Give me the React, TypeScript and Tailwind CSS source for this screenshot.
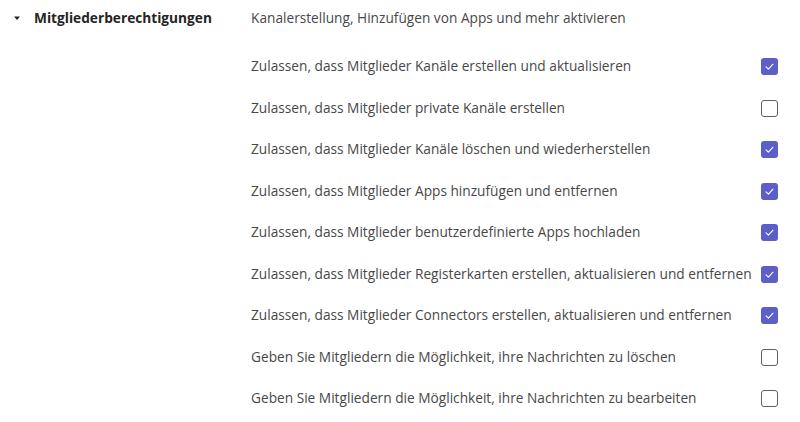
const rows = [
  { label: 'Zulassen, dass Mitglieder Kanäle erstellen und aktualisieren', checked: true },
  { label: 'Zulassen, dass Mitglieder private Kanäle erstellen', checked: false },
  { label: 'Zulassen, dass Mitglieder Kanäle löschen und wiederherstellen', checked: true },
  { label: 'Zulassen, dass Mitglieder Apps hinzufügen und entfernen', checked: true },
  { label: 'Zulassen, dass Mitglieder benutzerdefinierte Apps hochladen', checked: true },
  { label: 'Zulassen, dass Mitglieder Registerkarten erstellen, aktualisieren und entfernen', checked: true },
  { label: 'Zulassen, dass Mitglieder Connectors erstellen, aktualisieren und entfernen', checked: true },
  { label: 'Geben Sie Mitgliedern die Möglichkeit, ihre Nachrichten zu löschen', checked: false },
  { label: 'Geben Sie Mitgliedern die Möglichkeit, ihre Nachrichten zu bearbeiten', checked: false },
]

const Checkbox = ({ checked }: { checked: boolean }) => {
  if (checked) {
    return (
      <div className="flex h-[17px] w-[17px] items-center justify-center rounded-[3px] bg-[#5b5fc7]">
        <svg width="11" height="11" viewBox="0 0 12 12" fill="none">
          <path d="M2.2 6.3l2.6 2.6 5-5.4" stroke="white" strokeWidth="1.2" strokeLinecap="round" strokeLinejoin="round" />
        </svg>
      </div>
    )
  }
  return <div className="h-[17px] w-[17px] rounded-[3px] border border-[#616161] bg-white" />
}

const App = () => {
  return (
    <div
      className="flex h-[422px] w-[800px] bg-white text-[#484848]"
      style={{ fontFamily: '"Open Sans", "Noto Sans", sans-serif' }}
    >
      {/* left column: section title */}
      <div className="w-[251px] shrink-0">
        <div className="flex h-[36px] items-center pl-[12px]">
          <svg width="10" height="10" viewBox="0 0 10 10" className="mr-[12px]">
            <path d="M2 3.5h6L5 7z" fill="#242424" />
          </svg>
          <span className="text-[13.7px] font-bold text-[#242424]">Mitgliederberechtigungen</span>
        </div>
      </div>

      {/* right column: settings */}
      <div className="flex-1 pr-[22px]">
        <div className="flex h-[36px] items-center text-[13.7px]">
          Kanalerstellung, Hinzufügen von Apps und mehr aktivieren
        </div>
        <div className="mt-[10px]">
          {rows.map((row) => (
            <div key={row.label} className="flex h-[41.5px] items-center justify-between text-[13.7px]">
              <span className="whitespace-nowrap">{row.label}</span>
              <Checkbox checked={row.checked} />
            </div>
          ))}
        </div>
      </div>
    </div>
  )
}

export default App
